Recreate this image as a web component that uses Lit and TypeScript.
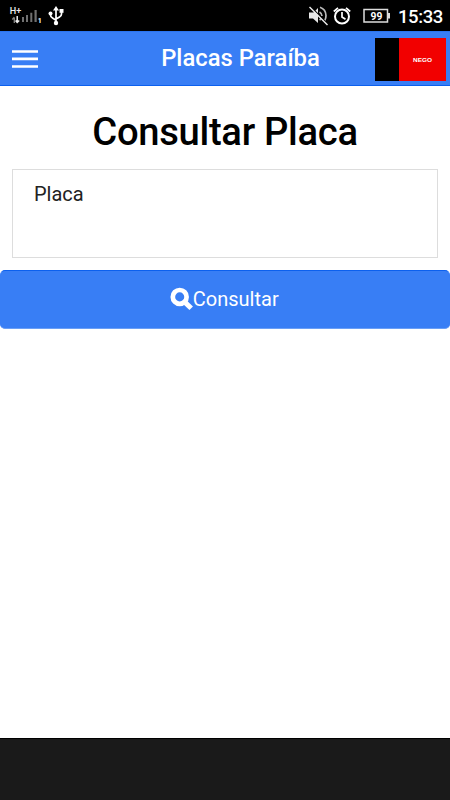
import { LitElement, html, css } from "lit";
import { customElement } from "lit/decorators.js";

@customElement("status-bar")
class StatusBar extends LitElement {
  static styles = css`
    :host { display: flex; align-items: center; justify-content: space-between; height: 31px; background: #000; color: #fff; }
    svg { display: block; }
    .right { display: flex; align-items: center; }
    .net { font: 500 9.500px Roboto, sans-serif; }
    .one { font: 700 7px Roboto, sans-serif; }
    .level { font: 700 11px Roboto, sans-serif; }
    .time { width: 45px; margin: 2px 7px 0 8px; font: 500 18.500px/22px Roboto, sans-serif; letter-spacing: -0.400px; white-space: nowrap; }
  `;
  render() {
    return html`
      <svg width="80" height="31" viewBox="0 0 80 31">
        <text class="net" x="9.700" y="14" fill="#eee" textLength="11.500" lengthAdjust="spacingAndGlyphs">H+</text>
        <path d="M14.300 23v-5.500M12.300 19.500L14.300 17.300" stroke="#888" stroke-width="1.300" fill="none"/>
        <path d="M17.200 16v6.500M15.600 20.500l1.600 2l2-2" stroke="#eee" stroke-width="1.500" fill="none"/>
        <path d="M22 17h2v5h-2zM26 15h2v7h-2zM30.300 12.700h2V22h-2zM34.500 10h2.200v12h-2.200z" fill="#707070"/>
        <text class="one" x="37.700" y="22.500" fill="#fff">1</text>
        <g stroke="#fff" stroke-width="1.700" fill="none">
          <path d="M56 9v14M50.500 13.500v1.500q0 2 2 3l3.500 2.200M61.500 12v2q0 2-2 3L56 19"/>
        </g>
        <path d="M56 6l3 4.500h-6z" fill="#fff"/>
        <circle cx="50.500" cy="13.500" r="2" fill="#fff"/>
        <path d="M59.500 9h4v3.800h-4z" fill="#fff"/>
        <circle cx="56" cy="23" r="2.200" fill="#fff"/>
      </svg>
      <div class="right">
        <svg width="90" height="31" viewBox="300 0 90 31">
          <path d="M309 12.500h4.500L318 8v15l-5-4.500h-4z" fill="#e8e8e8"/>
          <path d="M319.500 12q2.500 1.500 2.500 4M320 7.200q5.800 2 6 8.300q0 3-1.200 5M319.500 20l1.500-1" fill="none" stroke="#bbb" stroke-width="1.700"/>
          <path d="M310.500 6.500L328 24.500" stroke="#000" stroke-width="1.500"/>
          <path d="M309.500 7L327.500 25" stroke="#eee" stroke-width="1.500"/>
          <circle cx="342" cy="16.500" r="7" fill="none" stroke="#fff" stroke-width="2"/>
          <path d="M342 12v5l3.500 2.200M333.800 11.500l4.200-3.700M350.200 11.500L346 7.800" fill="none" stroke="#fff" stroke-width="1.700"/>
          <path d="M364 9.500h23.500v12.500H364z" fill="none" stroke="#ddd" stroke-width="1.500"/>
          <path d="M388 13h2v5.500h-2z" fill="#ddd"/>
          <text class="level" x="370.500" y="19.700" fill="#fff" textLength="11.800" lengthAdjust="spacingAndGlyphs">99</text>
        </svg>
        <span class="time">15:33</span>
      </div>`;
  }
}

@customElement("app-header")
class AppHeader extends LitElement {
  static styles = css`
    :host { display: grid; grid-template-columns: 106px 1fr 75px; align-items: center; box-sizing: border-box; height: 55px; background: #387ef5; border-top: 1px solid #2a74f0; border-bottom: 1px solid #0c60ee; }
    .menu { display: block; margin: 1px 0 0 12px; }
    .title { margin: 0 0 1px; text-align: center; color: #fff; font: 500 23.800px/30px Roboto, sans-serif; white-space: nowrap; }
    .flag { display: flex; width: 71px; height: 43px; margin: 2px 0 0; }
    .black { width: 24px; background: #000; }
    .red { flex: 1; display: flex; background: #f20000; }
    .nego { font: 700 6px "Liberation Sans", sans-serif; }
  `;
  render() {
    return html`
      <svg class="menu" width="26" height="20" viewBox="0 0 26 20"><path d="M0 2.500h26M0 9.900h26M0 17.500h26" stroke="#fff" stroke-width="2.700"/></svg>
      <h1 class="title">Placas Paraíba</h1>
      <div class="flag"><div class="black"></div><div class="red">
        <svg width="47" height="43"><text class="nego" x="14" y="23.700" fill="#fff" textLength="19" lengthAdjust="spacingAndGlyphs">NEGO</text></svg>
      </div></div>`;
  }
}

@customElement("app-root")
class AppRoot extends LitElement {
  static styles = css`
    :host { display: flex; flex-direction: column; height: 800px; background: #fff; font-family: Roboto, sans-serif; }
    .content { flex: 1; display: flex; flex-direction: column; }
    .heading { margin: 22px 0 0; height: 48px; text-align: center; color: #000; font-size: 38.200px; font-weight: 500; line-height: 48px; letter-spacing: -0.300px; }
    .field { box-sizing: border-box; height: 89px; margin: 13px 12px 0; padding: 10px 21px; border: 1px solid #ddd; color: #222; font-size: 20px; line-height: 28px; }
    .button { display: flex; align-items: center; justify-content: center; box-sizing: border-box; height: 59px; margin-top: 12px; border: 1px solid #0c60ee; border-bottom-color: #6a9ff6; border-left-color: #387ef5; border-right-color: #387ef5; border-radius: 5px; background: #387ef5; color: #fff; font: 400 20px/28px Roboto, sans-serif; padding: 0 1.500px 2px 0; }
    .bottom { height: 62px; box-sizing: border-box; border-top: 1px solid #000; background: #1a1a1a; }
  `;
  render() {
    return html`
      <status-bar></status-bar>
      <app-header></app-header>
      <main class="content">
        <h2 class="heading">Consultar Placa</h2>
        <label class="field">Placa</label>
        <button class="button">
          <svg width="23" height="24" viewBox="0 0 23 24"><circle cx="9.700" cy="9.900" r="6.900" fill="none" stroke="#fff" stroke-width="4.700"/><path d="M14 14.400l7.200 6.900" stroke="#fff" stroke-width="5"/></svg>
          <span>Consultar</span>
        </button>
      </main>
      <div class="bottom"></div>`;
  }
}
